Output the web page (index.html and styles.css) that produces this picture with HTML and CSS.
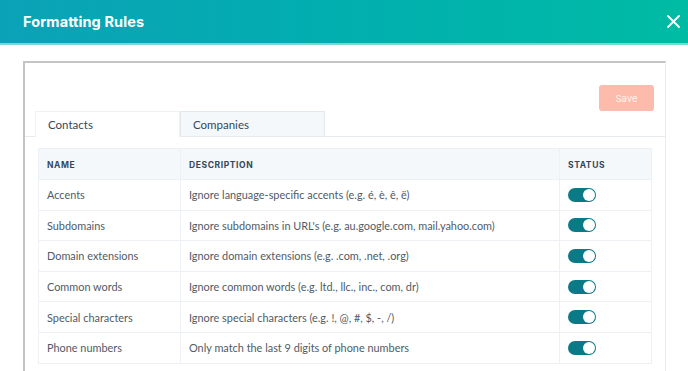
FILE: index.html
```html
<!DOCTYPE html>
<html lang="en">
<head>
    <meta charset="UTF-8">
    <meta name="viewport" content="width=device-width, initial-scale=1.0">
    <title>Formatting Rules</title>
    <link rel="stylesheet" href="styles.css">
</head>
<body>

<div class="modal-header">
    <h1>Formatting Rules</h1>
    <button class="close-button" aria-label="Close">
        <svg width="13" height="13" viewBox="0 0 13 13"><path d="M1 1 L12 12 M12 1 L1 12" stroke="#fff" stroke-width="1.8" stroke-linecap="round"/></svg>
    </button>
</div>

<div class="modal-body">
    <div class="panel">
        <div class="panel-actions">
            <button class="save-button" disabled>Save</button>
        </div>

        <div class="tabs">
            <div class="tab active">Contacts</div>
            <div class="tab">Companies</div>
        </div>

        <table class="rules">
            <thead>
                <tr>
                    <th class="col-name">Name</th>
                    <th>Description</th>
                    <th class="col-status">Status</th>
                </tr>
            </thead>
            <tbody>
                <tr>
                    <td>Accents</td>
                    <td>Ignore language-specific accents (e.g. é, è, ê, ë)</td>
                    <td><span class="toggle"></span></td>
                </tr>
                <tr>
                    <td>Subdomains</td>
                    <td>Ignore subdomains in URL's (e.g. au.google.com, mail.yahoo.com)</td>
                    <td><span class="toggle"></span></td>
                </tr>
                <tr>
                    <td>Domain extensions</td>
                    <td>Ignore domain extensions (e.g. .com, .net, .org)</td>
                    <td><span class="toggle"></span></td>
                </tr>
                <tr>
                    <td>Common words</td>
                    <td>Ignore common words (e.g. ltd., llc., inc., com, dr)</td>
                    <td><span class="toggle"></span></td>
                </tr>
                <tr>
                    <td>Special characters</td>
                    <td>Ignore special characters (e.g. !, @, #, $, -, /)</td>
                    <td><span class="toggle"></span></td>
                </tr>
                <tr>
                    <td>Phone numbers</td>
                    <td>Only match the last 9 digits of phone numbers</td>
                    <td><span class="toggle"></span></td>
                </tr>
            </tbody>
        </table>
    </div>
</div>

</body>
</html>
```

FILE: styles.css
```css
body {
    font-family: 'Inter', 'Open Sans', sans-serif;
    margin: 0;
    background-color: #fff;
    color: #516f90;
    overflow: hidden;
}

.modal-header {
    height: 43px;
    display: flex;
    align-items: center;
    justify-content: space-between;
    padding: 0 4px 0 23px;
    background: linear-gradient(90deg, #0ba2b7 0%, #00b0ae 55%, #00bba4 100%);
    border-bottom: 2px solid #7dd6cf;
}

.modal-header h1 {
    margin: 0;
    font-size: 14.5px;
    font-weight: 700;
    color: #fff;
    letter-spacing: 0.1px;
}

.close-button {
    background: none;
    border: none;
    padding: 4px;
    display: flex;
    cursor: pointer;
}

.modal-body {
    padding: 16px 22px 0 23px;
}

.panel {
    border-top: 2px solid #c4c4c4;
    border-left: 2px solid #c4c4c4;
    border-right: 1px solid #ececec;
    height: 320px;
}

.panel-actions {
    display: flex;
    justify-content: flex-end;
    padding: 22px 11px 0 0;
}

.save-button {
    width: 55px;
    height: 26px;
    border: none;
    border-radius: 3px;
    background-color: #fdbcab;
    color: #fff3ef;
    font-family: inherit;
    font-size: 9.5px;
}

.tabs {
    display: flex;
    padding-left: 10px;
    border-bottom: 1px solid #e6ebf0;
}

.tab {
    width: 145px;
    height: 25px;
    box-sizing: border-box;
    padding: 6px 0 0 12px;
    font-family: 'Lato', sans-serif;
    font-size: 11.5px;
    color: #33475b;
    background-color: #f5f8fa;
    border: 1px solid #e3e8ee;
    border-bottom: none;
}

.tab.active {
    background-color: #fff;
    border-color: #f0f3f6;
    margin-bottom: -1px;
    height: 26px;
}

.rules {
    margin: 11px 0 0 13px;
    width: 614px;
    border-collapse: collapse;
    font-family: 'Lato', sans-serif;
    font-size: 10.9px;
}

.rules th {
    background-color: #f5f8fa;
    color: #33475b;
    font-family: 'Inter', sans-serif;
    font-size: 8.5px;
    font-weight: 700;
    letter-spacing: 0.6px;
    text-transform: uppercase;
    text-align: left;
    height: 28px;
    padding: 2px 8px 0;
    border: 1px solid #edf1f5;
}

.rules td {
    height: 29.6px;
    padding: 0 8px;
    border: 1px solid #edf1f5;
    color: #505b66;
}

.col-name {
    width: 125px;
}

.col-status {
    width: 75px;
}

.toggle {
    display: block;
    width: 28px;
    height: 14px;
    border-radius: 7px;
    background-color: #0a7b86;
    position: relative;
}

.toggle::after {
    content: '';
    position: absolute;
    right: 1px;
    top: 1px;
    width: 12px;
    height: 12px;
    border-radius: 50%;
    background-color: #fff;
}
```
